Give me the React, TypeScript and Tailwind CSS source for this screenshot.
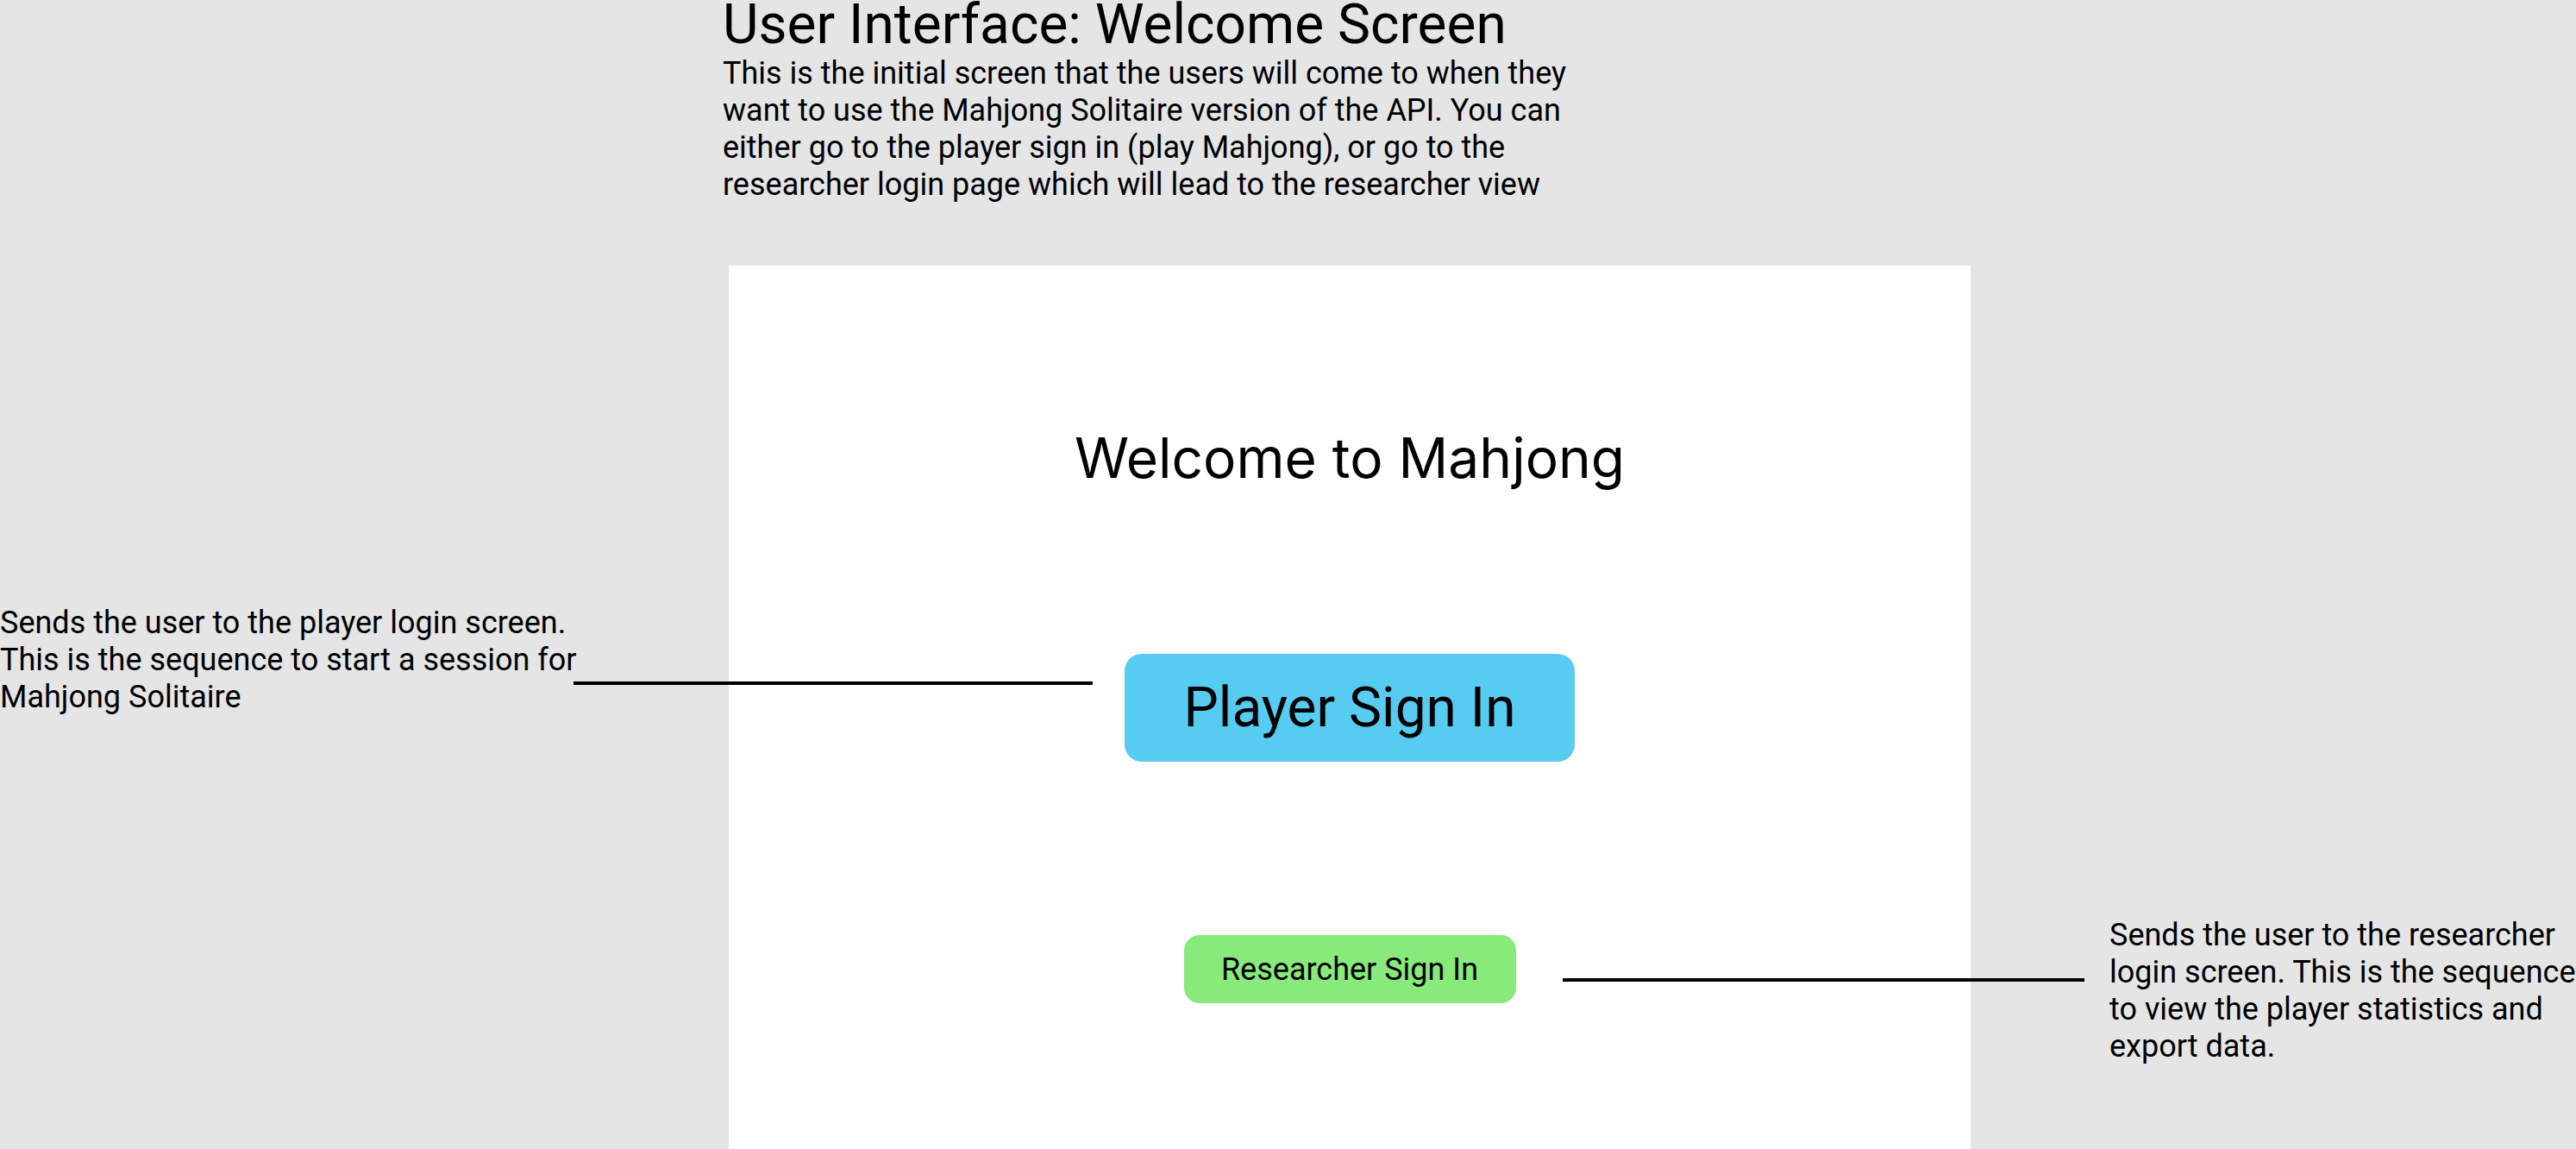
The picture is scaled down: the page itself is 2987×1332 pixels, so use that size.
export default function App() {
  return (
    <div className="relative h-[1332px] w-[2987px] overflow-hidden bg-[#e5e5e5] font-['Roboto',sans-serif] text-black">
      {/* Header */}
      <div className="pl-[838px]">
        <h1 className="text-[64px] font-normal leading-[58px]">User Interface: Welcome Screen</h1>
        <p className="mt-[6px] w-[1000px] text-[36px] leading-[43px]">
          This is the initial screen that the users will come to when they want to use the Mahjong Solitaire version
          of the API. You can either go to the player sign in (play Mahjong), or go to the researcher login page which
          will lead to the researcher view
        </p>
      </div>

      {/* Canvas row */}
      <div className="mt-[72px] flex">
        <div className="w-[845px] shrink-0">
          <p className="mt-[393px] w-[700px] text-[36px] leading-[43px]">
            Sends the user to the player login screen. This is the sequence to start a session for Mahjong Solitaire
          </p>
        </div>

        {/* Welcome frame */}
        <div className="flex h-[1024px] w-[1440px] shrink-0 flex-col items-center bg-white pt-[183px]">
          <h2 className="font-['Inter',sans-serif] text-[64px] font-normal leading-[80px]">Welcome to Mahjong</h2>
          <button className="mt-[187px] flex h-[125px] w-[522px] items-center justify-center rounded-[20px] bg-[#56ccf2] text-[64px] leading-none">
            Player Sign In
          </button>
          <button className="mt-[201px] flex h-[79px] w-[385px] items-center justify-center rounded-[18px] bg-[#88ea7b] text-[36px] leading-none">
            Researcher Sign In
          </button>
        </div>

        <div className="min-w-0 flex-1">
          <p className="ml-[161px] mt-[755px] w-[570px] text-[36px] leading-[43px]">
            Sends the user to the researcher login screen. This is the sequence to view the player statistics and export
            data.
          </p>
        </div>
      </div>

      {/* Connector lines */}
      <div className="absolute left-[665px] top-[790px] h-[4px] w-[602px] bg-black" />
      <div className="absolute left-[1812px] top-[1134px] h-[4px] w-[605px] bg-black" />
    </div>
  );
}
